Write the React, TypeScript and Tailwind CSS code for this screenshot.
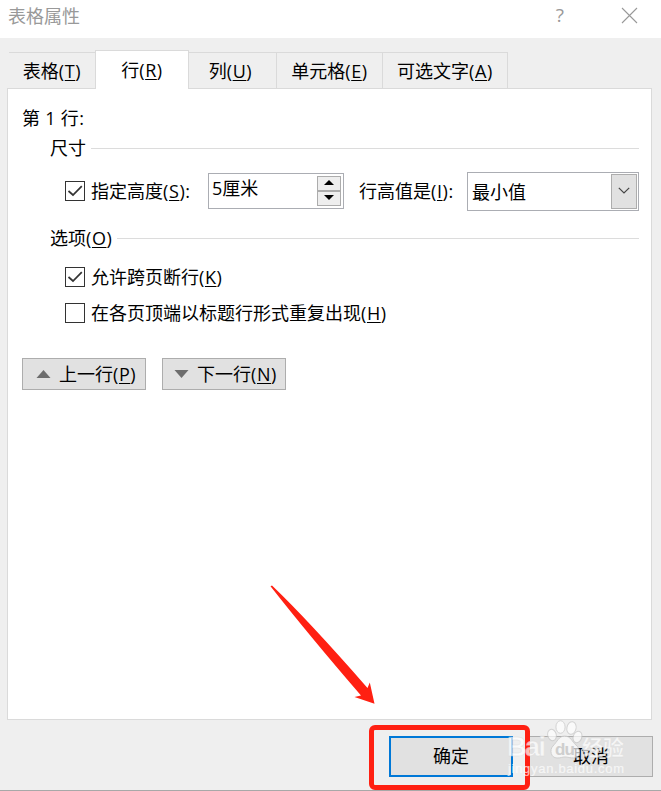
import type { ReactNode } from 'react'
import clsx from 'clsx'

const TABS = [
  { label: '表格', hotkey: 'T', width: 'w-[86px]' },
  { label: '行', hotkey: 'R', width: 'w-[94px]', active: true },
  { label: '列', hotkey: 'U', width: 'w-[88px] pr-1' },
  { label: '单元格', hotkey: 'E', width: 'w-[106px]' },
  { label: '可选文字', hotkey: 'A', width: 'w-[125px]' },
]

function Label({ text, hotkey, suffix }: { text: string; hotkey: string; suffix?: string }) {
  return (
    <span className="whitespace-nowrap">
      {text}
      <span className="tracking-[0.6px]">
        (<span className="underline decoration-1 underline-offset-2">{hotkey}</span>){suffix}
      </span>
    </span>
  )
}

function Checkbox({ checked, children }: { checked?: boolean; children: ReactNode }) {
  return (
    <label className="flex items-center gap-1.5">
      <span className="flex h-5 w-5 shrink-0 items-center justify-center border border-[#333]">
        {checked && (
          <svg width="18" height="18" viewBox="0 0 18 18" fill="none" stroke="#333" strokeWidth="1.7">
            <path d="M2.5 9 L7 13 L15.8 4.2" />
          </svg>
        )}
      </span>
      {children}
    </label>
  )
}

function SectionTitle({ children }: { children: ReactNode }) {
  return (
    <div className="flex h-[30px] items-center gap-[5px] pl-[42px] pr-3">
      {children}
      <span className="h-px flex-1 bg-[#dcdcdc]" />
    </div>
  )
}

function RowButton({ up, text, hotkey }: { up?: boolean; text: string; hotkey: string }) {
  return (
    <button
      className={clsx(
        'flex h-8 w-[124px] items-center gap-2 border border-[#adadad] bg-[#e1e1e1]',
        up ? 'pl-[13px]' : 'pl-[11px]',
      )}
    >
      <svg width="15" height="8" viewBox="0 0 15 8" fill="#6d6d6d">
        {up ? <path d="M0.5 8 L7.5 0 L14.5 8 Z" /> : <path d="M0.5 0 H14.5 L7.5 8 Z" />}
      </svg>
      <Label text={text} hotkey={hotkey} />
    </button>
  )
}

function Watermark() {
  return (
    <div className="pointer-events-none absolute left-[507px] top-[718px] h-[64px] w-[122px] opacity-70">
      <svg width="122" height="64" viewBox="0 0 122 64">
        <g fill="#fff" stroke="#c8c8c8" strokeWidth="1">
          <ellipse cx="45" cy="17" rx="4.3" ry="5.8" transform="rotate(-15 45 17)" />
          <ellipse cx="53.5" cy="9" rx="4.6" ry="6.3" />
          <ellipse cx="64.5" cy="10" rx="4.6" ry="6.3" transform="rotate(12 64.5 10)" />
          <ellipse cx="70.5" cy="19" rx="4.3" ry="5.8" transform="rotate(20 70.5 19)" />
          <path d="M57.5 18 C52 18 50 24 46 28 C42 32 44 40 50 40 C54 40 55 39 58 39 C61 39 63 40 67 40 C74 40 74 31 69 27 C65 24 64 18 57.5 18 Z" />
        </g>
        <g fontFamily="Liberation Sans, sans-serif" fontWeight="700">
          <text x="0" y="38" fontSize="27" fill="#fff" stroke="#d8d8d8" strokeWidth="0.4" textLength="39">Bai</text>
          <text x="48" y="37" fontSize="17" fill="#c6c6c6" textLength="20">du</text>
        </g>
        <text x="75" y="37" fontSize="21" fontWeight="700" fontFamily="Noto Sans CJK SC, sans-serif" fill="#fff" stroke="#d8d8d8" strokeWidth="0.3">经验</text>
        <text x="1" y="55" fontSize="13" fontFamily="Liberation Sans, sans-serif" fill="#fff" stroke="#fff" strokeWidth="0.2" textLength="116">jingyan.baidu.com</text>
      </svg>
    </div>
  )
}

export default function App() {
  return (
    <div className="relative flex h-[791px] w-[661px] flex-col overflow-hidden border-b border-[#a8a8a8] bg-[#efefef] font-['Open_Sans','Noto_Sans_CJK_SC',sans-serif] text-[18px] font-normal leading-none text-black">
      {/* Title bar */}
      <header className="flex h-[38px] shrink-0 items-center justify-between bg-white pb-[7px] pl-2 pr-[23px] text-[#999]">
        <h1>表格属性</h1>
        <div className="flex items-center gap-[57px]">
          <span className="text-[19px]">?</span>
          <svg width="17" height="17" viewBox="0 0 17 17" stroke="#999" strokeWidth="1.1">
            <path d="M1 1 L16 16 M16 1 L1 16" />
          </svg>
        </div>
      </header>

      {/* Tabs */}
      <nav className="mt-3 flex h-[38px] shrink-0 items-end pl-[9px]">
        {TABS.map((tab) => (
          <div
            key={tab.hotkey}
            className={clsx(
              'flex items-center justify-center border-t border-[#dadada]',
              tab.width,
              tab.active ? 'relative z-10 -mb-px h-[39px] border-x bg-white' : 'h-9',
              !tab.active && tab.hotkey !== 'T' && 'border-r',
            )}
          >
            <Label text={tab.label} hotkey={tab.hotkey} />
          </div>
        ))}
      </nav>

      {/* Row page */}
      <main className="ml-[7px] h-[632px] w-[645px] shrink-0 border border-[#dadada] bg-white pt-3.5">
        <div className="flex h-[30px] items-center pl-3.5 tracking-[0.3px]">第 1 行:</div>

        <SectionTitle>尺寸</SectionTitle>
        <div className="mt-[9px] flex h-[39px] items-start pl-[57px]">
          <div className="w-[143px] pt-[9px]">
            <Checkbox checked>
              <Label text="指定高度" hotkey="S" suffix=":" />
            </Checkbox>
          </div>
          <div className="mt-px flex h-9 w-[136px] justify-between border border-[#abadb3] p-0.5">
            <span className="pl-px pt-[3px]">5厘米</span>
            <div className="flex w-6 flex-col">
              {['M6 0 L11 5 H1 Z', 'M1 0 H11 L6 5 Z'].map((d) => (
                <span key={d} className="flex flex-1 items-center justify-center border border-[#acacac] bg-[#eeeeee] pb-0.5 pr-px">
                  <svg width="12" height="5" viewBox="0 0 12 5">
                    <path d={d} />
                  </svg>
                </span>
              ))}
            </div>
          </div>
          <div className="w-[123px] pl-[15px] pt-2.5">
            <Label text="行高值是" hotkey="I" suffix=":" />
          </div>
          <div className="flex h-[39px] w-[172px] items-center justify-between border border-[#abadb3] py-px pl-1 pr-px">
            <span>最小值</span>
            <span className="flex h-[35px] w-[26px] items-center justify-center border border-[#adadad] bg-[#e1e1e1] pb-0.5">
              <svg width="12" height="7" viewBox="0 0 12 7" fill="none" stroke="#444" strokeWidth="1.2">
                <path d="M0.8 0.8 L6 6 L11.2 0.8" />
              </svg>
            </span>
          </div>
        </div>

        <div className="mt-3">
          <SectionTitle>
            <Label text="选项" hotkey="O" />
          </SectionTitle>
        </div>
        <div className="mt-1.5 flex flex-col pl-[57px] *:h-9">
          <Checkbox checked>
            <Label text="允许跨页断行" hotkey="K" />
          </Checkbox>
          <Checkbox>
            <Label text="在各页顶端以标题行形式重复出现" hotkey="H" />
          </Checkbox>
        </div>

        <div className="mt-[27px] flex gap-4 pl-3.5">
          <RowButton up text="上一行" hotkey="P" />
          <RowButton text="下一行" hotkey="N" />
        </div>
      </main>

      {/* Footer */}
      <footer className="mt-4 flex justify-end gap-4 pr-2">
        <button className="h-[41px] w-[124px] border-2 border-[#0078d7] bg-[#e1e1e1] pb-0.5">确定</button>
        <button className="h-[41px] w-[124px] border border-[#adadad] bg-[#e1e1e1] pb-px">取消</button>
      </footer>

      {/* Annotations */}
      <svg className="absolute left-[268px] top-[582px]" width="110" height="126" viewBox="0 0 110 126" fill="#ff2012">
        <path d="M2.5 4.2 L4 3.6 Q40 38 99.5 106 L101.8 100.5 L106.5 121.8 L86.5 115 L93 113.5 Q40 52 2.5 4.2 Z" />
      </svg>
      <div className="absolute left-[369px] top-[725px] h-[65px] w-[161px] rounded-md border-[5px] border-[#ff2012]" />
      <Watermark />
    </div>
  )
}
